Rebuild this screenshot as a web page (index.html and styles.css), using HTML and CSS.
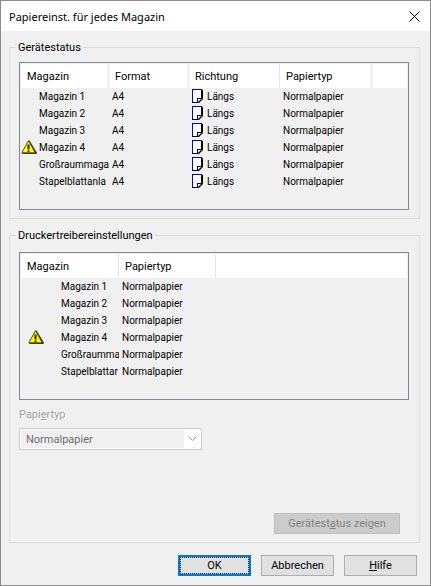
FILE: index.html
```html
<!DOCTYPE html>
<html lang="de">
  <head>
    <meta charset="UTF-8" />
    <meta name="viewport" content="width=device-width, initial-scale=1.0" />
    <title>Papiereinst. für jedes Magazin</title>
    <link rel="stylesheet" href="styles.css">
  </head>
  <body>
    <!-- icons used in the lists -->
    <svg class="symbols" aria-hidden="true">
      <symbol id="warning" viewBox="0 0 16 15">
        <path d="M8 1.5 L15 13 H2 Z" fill="#333" stroke="#333" stroke-width="2" stroke-linejoin="round" />
        <path d="M7.5 0.8 L14.2 12.8 H0.8 Z" fill="#ffff00" stroke="#55551c" stroke-width="1" stroke-linejoin="round" />
        <path d="M6.5 4.5 H8.5 V9.5 H6.5 Z M6.5 10.5 H8.5 V12 H6.5 Z" fill="#222" />
      </symbol>
      <symbol id="page" viewBox="0 0 11 14">
        <path d="M0 0 H10 V9 L6 14 H0 Z" fill="#fff" />
        <path d="M0 0 H10 V1 H1 V13 H0 Z" fill="#0000f0" />
        <path d="M9 1 H11 V10 L7 14 H0 V13 H5 V9 H9 Z" fill="#000" />
        <path d="M6 10 H9 L6 13 Z" fill="#fff" />
      </symbol>
    </svg>

    <div class="dialog">
      <header class="titlebar">
        <h1>Papiereinst. für jedes Magazin</h1>
        <button type="button" class="close" aria-label="Schließen">
          <svg width="11" height="11" viewBox="0 0 11 11"><path d="M0.5 0.5 L10.5 10.5 M10.5 0.5 L0.5 10.5" stroke="#000" fill="none" /></svg>
        </button>
      </header>

      <form class="content">
        <fieldset class="group">
          <legend>Gerätestatus</legend>
          <div class="list">
            <table class="status">
              <colgroup>
                <col class="col-tray"><col class="col-format"><col class="col-direction"><col class="col-type"><col>
              </colgroup>
              <thead>
                <tr><th>Magazin</th><th>Format</th><th>Richtung</th><th>Papiertyp</th><td></td></tr>
              </thead>
              <tbody>
                <tr><td>Magazin 1</td><td>A4</td><td><svg class="page"><use href="#page" /></svg>Längs</td><td>Normalpapier</td><td></td></tr>
                <tr><td>Magazin 2</td><td>A4</td><td><svg class="page"><use href="#page" /></svg>Längs</td><td>Normalpapier</td><td></td></tr>
                <tr><td>Magazin 3</td><td>A4</td><td><svg class="page"><use href="#page" /></svg>Längs</td><td>Normalpapier</td><td></td></tr>
                <tr class="warn"><td><svg class="warning"><use href="#warning" /></svg>Magazin 4</td><td>A4</td><td><svg class="page"><use href="#page" /></svg>Längs</td><td>Normalpapier</td><td></td></tr>
                <tr><td>Großraummaga</td><td>A4</td><td><svg class="page"><use href="#page" /></svg>Längs</td><td>Normalpapier</td><td></td></tr>
                <tr><td>Stapelblattanla</td><td>A4</td><td><svg class="page"><use href="#page" /></svg>Längs</td><td>Normalpapier</td><td></td></tr>
              </tbody>
            </table>
          </div>
        </fieldset>

        <fieldset class="group settings">
          <legend>Druckertreibereinstellungen</legend>
          <div class="list">
            <table class="driver">
              <colgroup>
                <col class="col-tray"><col class="col-type"><col>
              </colgroup>
              <thead>
                <tr><th>Magazin</th><th>Papiertyp</th><td></td></tr>
              </thead>
              <tbody>
                <tr><td>Magazin 1</td><td>Normalpapier</td><td></td></tr>
                <tr><td>Magazin 2</td><td>Normalpapier</td><td></td></tr>
                <tr><td>Magazin 3</td><td>Normalpapier</td><td></td></tr>
                <tr class="warn"><td><svg class="warning"><use href="#warning" /></svg>Magazin 4</td><td>Normalpapier</td><td></td></tr>
                <tr><td>Großraumma</td><td>Normalpapier</td><td></td></tr>
                <tr><td>Stapelblattar</td><td>Normalpapier</td><td></td></tr>
              </tbody>
            </table>
          </div>

          <label class="select-label" for="paperType">Papi<u>e</u>rtyp</label>
          <div class="select">
            <select id="paperType" disabled>
              <option>Normalpapier</option>
            </select>
            <span class="arrow">
              <svg width="9" height="6" viewBox="0 0 9 6"><path d="M0.5 0.5 L4.5 4.5 L8.5 0.5" stroke="#a0a0a0" fill="none" /></svg>
            </span>
          </div>

          <div class="show-status">
            <button type="button" class="btn" disabled>Gerätest<u>a</u>tus zeigen</button>
          </div>
        </fieldset>

        <div class="actions">
          <button type="button" class="btn default">OK</button>
          <button type="button" class="btn">Abbrechen</button>
          <button type="button" class="btn"><u>H</u>ilfe</button>
        </div>
      </form>
    </div>
  </body>
</html>
```
FILE: styles.css
```css
* {
  padding: 0;
  margin: 0;
  box-sizing: border-box;
}

body,
button,
select {
  font-family: Roboto, Arial, sans-serif;
  font-size: 11px;
  line-height: 17px;
  color: #000;
}

.symbols {
  position: absolute;
  width: 0;
  height: 0;
}

.dialog {
  display: flex;
  flex-direction: column;
  min-height: 100vh;
  border: 1px solid #8c8c8c;
  background-color: #f0f0f0;
}

/* title bar */
.titlebar {
  display: flex;
  align-items: center;
  justify-content: space-between;
  height: 30px;
  padding: 0 9px 0 8px;
  background-color: white;
}

.titlebar h1 {
  font-family: "Noto Sans", "Open Sans", sans-serif;
  font-size: 11px;
  font-weight: 400;
}

.close {
  display: flex;
  padding: 1px;
  border: none;
  background: none;
}

.content {
  padding: 10px 10px 0 8px;
}

/* group boxes */
.group {
  min-width: 0;
  padding: 8px 10px 8px 9px;
  border: 1px solid #dcdcdc;
}

.group legend {
  padding: 0 2px;
  margin-left: -3px;
  line-height: 13px;
}

.settings {
  margin-top: 10px;
  padding-top: 10px;
}

/* lists */
.list {
  min-height: 148px;
  padding: 1px;
  border: 1px solid #828790;
}

table {
  width: 100%;
  table-layout: fixed;
  border-collapse: collapse;
}

.status .col-tray { width: 88px; }
.status .col-format { width: 80px; }
.status .col-direction { width: 91px; }
.status .col-type { width: 92px; }
.driver .col-tray { width: 98px; }
.driver .col-type { width: 97px; }

thead {
  background-color: white;
}

thead tr {
  height: 24px;
}

th {
  padding-left: 6px;
  font-weight: 400;
  text-align: left;
  box-shadow: inset -1px 0 #e5e5e5;
}

tbody {
  font-size: 10px;
}

tbody td {
  height: 17px;
  padding-left: 3px;
  overflow: hidden;
  white-space: nowrap;
}

.status tbody td:first-child {
  padding-left: 18px;
}

.driver tbody td:first-child {
  padding-left: 40px;
}

.page {
  width: 11px;
  height: 14px;
  margin-top: 1px;
  margin-right: 4px;
  vertical-align: top;
}

.warning {
  width: 16px;
  height: 15px;
  margin-top: 1px;
  margin-left: -18px;
  margin-right: 2px;
  vertical-align: top;
}

.driver .warning {
  margin-left: -33px;
  margin-right: 17px;
}

/* paper type */
.select-label {
  display: block;
  margin: 6px 0 5px;
  color: #a0a0a0;
  text-shadow: 1px 1px white;
}

.select {
  position: relative;
  width: 183px;
}

.select select {
  display: block;
  width: 100%;
  height: 22px;
  padding: 0 20px 0 6px;
  appearance: none;
  border: 1px solid #ccc;
  border-radius: 0;
  background-color: #f0f0f0;
  box-shadow: inset 0 0 0 1px white;
  color: #6d6d6d;
  opacity: 1;
}

.arrow {
  position: absolute;
  top: 1px;
  right: 1px;
  bottom: 1px;
  display: flex;
  align-items: center;
  justify-content: center;
  width: 17px;
  background-color: white;
  pointer-events: none;
}

/* buttons */
.btn {
  min-width: 73px;
  height: 21px;
  border: 1px solid #adadad;
  background-color: #e1e1e1;
}

.btn.default {
  border: 2px solid #0078d7;
  outline: 1px dotted #000;
  outline-offset: -3px;
}

.btn:disabled {
  min-width: 126px;
  border-color: #bfbfbf;
  background-color: #ccc;
  color: #838383;
}

.show-status {
  display: flex;
  justify-content: flex-end;
  margin-top: 63px;
  padding-right: 9px;
}

.actions {
  display: flex;
  justify-content: flex-end;
  gap: 10px;
  margin-top: 12px;
  padding-right: 3px;
}
```
